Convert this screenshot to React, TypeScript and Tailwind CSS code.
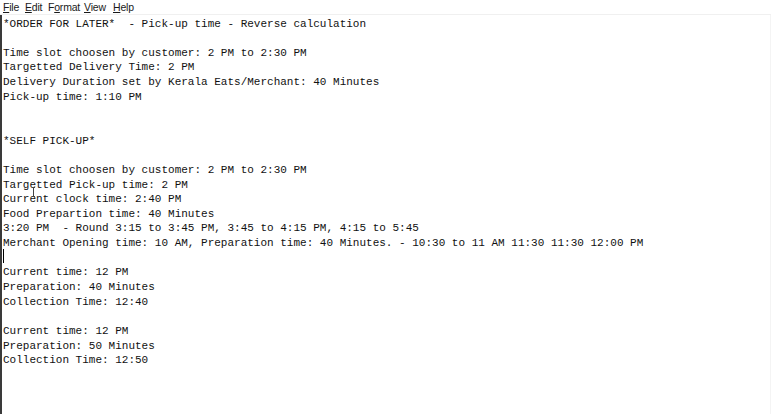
import React from "react";

const lines = [
  "*ORDER FOR LATER*  - Pick-up time - Reverse calculation",
  "",
  "Time slot choosen by customer: 2 PM to 2:30 PM",
  "Targetted Delivery Time: 2 PM",
  "Delivery Duration set by Kerala Eats/Merchant: 40 Minutes",
  "Pick-up time: 1:10 PM",
  "",
  "",
  "*SELF PICK-UP*",
  "",
  "Time slot choosen by customer: 2 PM to 2:30 PM",
  "Targetted Pick-up time: 2 PM",
  "Current clock time: 2:40 PM",
  "Food Prepartion time: 40 Minutes",
  "3:20 PM  - Round 3:15 to 3:45 PM, 3:45 to 4:15 PM, 4:15 to 5:45",
  "Merchant Opening time: 10 AM, Preparation time: 40 Minutes. - 10:30 to 11 AM 11:30 11:30 12:00 PM",
  "",
  "Current time: 12 PM",
  "Preparation: 40 Minutes",
  "Collection Time: 12:40",
  "",
  "Current time: 12 PM",
  "Preparation: 50 Minutes",
  "Collection Time: 12:50",
];

export default function App() {
  return (
    <div className="w-[771px] h-[414px] bg-white overflow-hidden flex flex-col text-black">
      <div
        className="h-[15px] flex items-center pl-[3px] text-[10.5px] leading-none tracking-[-0.2px] text-[#1a1a1a] border-b border-[#f0f0f0]"
        style={{ fontFamily: '"Liberation Sans", "Noto Sans", sans-serif' }}
      >
        <span className="w-[22px] shrink-0">
          <span className="underline underline-offset-1">F</span>ile
        </span>
        <span className="w-[23px] shrink-0">
          <span className="underline underline-offset-1">E</span>dit
        </span>
        <span className="w-[36px] shrink-0">
          F<span className="underline underline-offset-1">o</span>rmat
        </span>
        <span className="w-[29px] shrink-0">
          <span className="underline underline-offset-1">V</span>iew
        </span>
        <span className="shrink-0">
          <span className="underline underline-offset-1">H</span>elp
        </span>
      </div>
      <div className="relative flex-1 border-l-2 border-[#3a3a3a] border-r border-r-[#f4f4f4]">
        <div
          className="whitespace-pre text-[11px] leading-[14.65px] pl-[1px] pt-[1.5px] text-[#111]"
          style={{ fontFamily: '"Liberation Mono", "DejaVu Sans Mono", monospace' }}
        >
          {lines.map((l, i) => (
            <div key={i} className="h-[14.65px]">
              {l}
            </div>
          ))}
        </div>
        <div className="absolute left-[1px] top-[234px] w-px h-[14px] bg-black" />
        <div className="absolute left-[30px] top-[172px] w-[3px] h-[10px] border-y border-[#444]">
          <div className="mx-auto w-px h-full bg-[#444]" />
        </div>
      </div>
    </div>
  );
}
